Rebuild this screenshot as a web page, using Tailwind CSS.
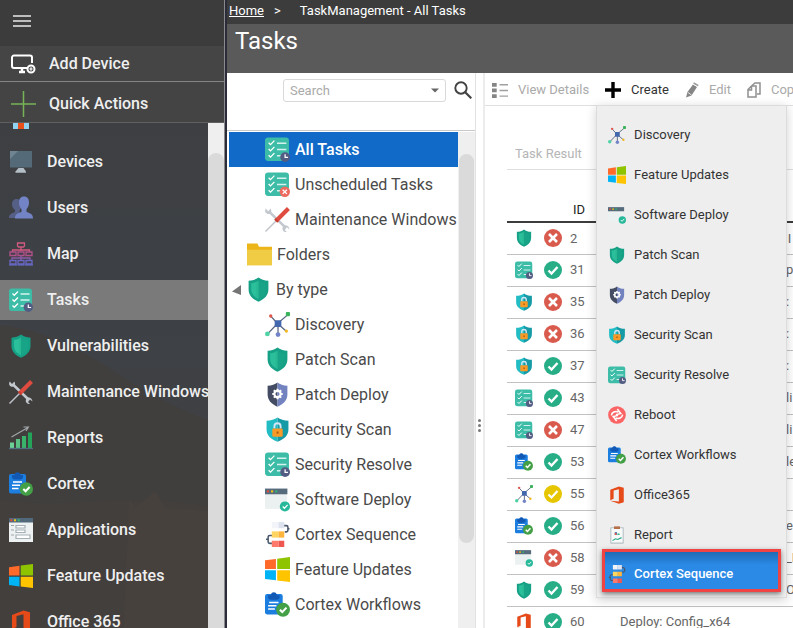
<!DOCTYPE html>
<html lang="en">
<head>
    <meta charset="UTF-8">
    <meta name="viewport" content="width=device-width, initial-scale=1.0">
    <title>Tasks - TaskManagement</title>
    <!-- Tailwind CSS CDN -->
    <script src="https://cdn.jsdelivr.net/npm/@tailwindcss/browser@4"></script>
</head>
<body class="flex h-screen overflow-hidden bg-[#2a2c38] font-['Roboto',sans-serif] text-[#4a4a4a]">

    <!-- Icon definitions -->
    <svg class="hidden" aria-hidden="true">
        <symbol id="i-checklist" viewBox="0 0 24 24">
            <rect x="0" y="0.500" width="23" height="22.500" rx="3" fill="#3dbda7"/>
            <path d="M3.500 5.500l1.800 1.800L9 3.500M3.500 11.500l1.800 1.800L9 9.500M3.500 17.500l1.800 1.800L9 15.500" fill="none" stroke="#fff" stroke-width="1.300"/>
            <path d="M11.500 6h9M11.500 12h9M11.500 18h5" stroke="#d5f3ee" stroke-width="1.300"/>
        </symbol>
        <symbol id="i-tasks" viewBox="0 0 24 24">
            <use href="#i-checklist"/>
            <circle cx="19.300" cy="19.300" r="4.700" fill="#535d83"/>
            <path d="M19.300 16.500v3h2.800" fill="none" stroke="#fff" stroke-width="1.200"/>
        </symbol>
        <symbol id="i-unscheduled" viewBox="0 0 24 24">
            <use href="#i-checklist"/>
            <circle cx="19" cy="19" r="5" fill="#ed6a5e"/>
            <path d="M17 17l4 4M21 17l-4 4" stroke="#fff" stroke-width="1.300"/>
        </symbol>
        <symbol id="i-shield" viewBox="0 0 24 24">
            <path d="M12 0.500c2.500 1.800 5.500 3 9.500 3.200V12c0 5.500-4 9.500-9.500 11.700C6.500 21.500 2.500 17.500 2.500 12V3.700C6.500 3.500 9.500 2.300 12 .500z" fill="#16a085"/>
            <path d="M12 3.500c-2 1.500-4.500 2.300-7 2.600V12c0 4.200 3 7.200 7 9z" fill="#2bc09b"/>
            <path d="M12 3.500c2 1.500 4.500 2.300 7 2.600V12c0 4.200-3 7.200-7 9z" fill="#17a487"/>
            <path d="M12 3.500c-.7.500-1.400.9-2 1.200V20c.6.400 1.300.7 2 1z" fill="#28b893"/>
        </symbol>
        <symbol id="i-shield-gear" viewBox="0 0 24 24">
            <path d="M12 .500C9.500 2.300 6.500 3.500 2.500 3.700V12c0 5.500 4 9.500 9.500 11.700z" fill="#434c63"/>
            <path d="M12 .500c2.500 1.800 5.500 3 9.500 3.200V12c0 5.500-4 9.500-9.500 11.700z" fill="#7383bf"/>
            <circle cx="12" cy="11.500" r="3" fill="none" stroke="#fff" stroke-width="2"/>
            <path d="M12 6.500v2M12 14.500v2M7 11.500h2M15 11.500h2M8.500 8l1.400 1.400M14.100 13.600l1.400 1.400M15.500 8l-1.400 1.400M9.900 13.600L8.500 15" stroke="#fff" stroke-width="2"/>
        </symbol>
        <symbol id="i-shield-lock" viewBox="0 0 24 24">
            <path d="M12 .500C9.500 2.300 5.500 3.500 1.500 3.700V12c0 5.500 4 9.500 10.500 11.700z" fill="#22bcc4"/>
            <path d="M12 .500c2.500 1.800 6.500 3 10.500 3.200V12c0 5.500-4 9.500-10.500 11.700z" fill="#169aa6"/>
            <path d="M9 11V9a3 3 0 0 1 6 0v2" fill="none" stroke="#d5e4f5" stroke-width="1.800"/>
            <rect x="7" y="11" width="10" height="8" rx="1" fill="#f79a28"/>
            <rect x="11.200" y="14" width="1.800" height="2" fill="#a85b10"/>
        </symbol>
        <symbol id="i-discovery" viewBox="0 0 24 24">
            <path d="M12 11L22 2.500M12 11L2.500 21M12 11L5.500 4M12.500 11v11M12 11l8.500 7.500" stroke="#566380" stroke-width="1.200"/>
            <rect x="9.300" y="8" width="6.400" height="6.400" rx="1.200" fill="#4468ad"/>
            <rect x="20" y="0" width="4" height="4" rx="1" fill="#3db35e"/>
            <circle cx="5.500" cy="3.800" r="1.600" fill="#e0554b"/>
            <circle cx="2.300" cy="21" r="2.300" fill="#4fd3a5"/>
            <circle cx="12.500" cy="21.700" r="2.300" fill="#7484c9"/>
            <circle cx="20.500" cy="18.300" r="1.600" fill="#f2b822"/>
        </symbol>
        <symbol id="i-windows" viewBox="0 0 24 24">
            <path d="M0 3.200L10.500 1.800V11.500H0z" fill="#ff6a2b"/>
            <path d="M11.700 1.600L24 0v11.500H11.700z" fill="#8fc400"/>
            <path d="M0 12.700h10.500v9.700L0 21z" fill="#00b3f4"/>
            <path d="M11.700 12.700H24V24l-12.300-1.500z" fill="#ffc400"/>
        </symbol>
        <symbol id="i-tools" viewBox="0 0 24 24">
            <path d="M4 4.500l15.500 15" stroke="#c3c8ce" stroke-width="2.500"/>
            <path d="M5.500 1.500L3 4 .800 1.500C-.5 3.500 0 6 2.500 6.700 5 7.200 7 5 5.500 1.500z" fill="#c3c8ce"/>
            <path d="M23.500 21.500L21 19.500l-2 2.500 2 2c-2.500.500-5-1.500-4-4.500s6-2.500 6.500 2z" fill="#c3c8ce"/>
            <path d="M.500 23.500L11 13" stroke="#bfc4ca" stroke-width="1.400"/>
            <path d="M11 13L22.500 1.500" stroke="#e04b3f" stroke-width="4"/>
            <path d="M9.500 11.500l3 3" stroke="#c93c31" stroke-width="2"/>
        </symbol>
        <symbol id="i-folder" viewBox="0 0 24 24">
            <path d="M0 1.500h10l1.500 3H24V10H0z" fill="#ecb61a"/>
            <path d="M0 7.500h24V22.500H0z" fill="#f0cc45"/>
        </symbol>
        <symbol id="i-deploy" viewBox="0 0 24 24">
            <path d="M0 7h21v14H0z" fill="#ebf0f0"/>
            <path d="M0 1.500h21.500V7H0z" fill="#566b7c"/>
            <rect x="1.800" y="3.200" width="2" height="2" fill="#e24d3f"/>
            <rect x="5.800" y="3.200" width="2" height="2" fill="#f1c40f"/>
            <rect x="9.800" y="3.200" width="2" height="2" fill="#2eb872"/>
            <circle cx="19.100" cy="18.700" r="4.900" fill="#28b99b"/>
            <path d="M17 18.700l1.700 1.700 3-3.200" fill="none" stroke="#fff" stroke-width="1.200"/>
        </symbol>
        <symbol id="i-sequence" viewBox="0 0 24 24">
            <path d="M18 3.500h2.500a1.500 1.500 0 0 1 1.500 1.500v3a1.500 1.500 0 0 1-1.500 1.500H19M22 6.500h1.500M7 13H4.500A1.500 1.500 0 0 0 3 14.500V19a1.500 1.500 0 0 0 1.500 1.500H7M1 16.500h2" fill="none" stroke="#4b586b" stroke-width="1.500"/>
            <path d="M6.500 0H13v6H6.500z" fill="#f2f4fa"/><path d="M13 0h5.500v6H13z" fill="#dce2ee"/>
            <path d="M6.500 9H13v6H6.500z" fill="#ffd562"/><path d="M13 9h5.500v6H13z" fill="#ffb43b"/>
            <path d="M6.500 18H13v6H6.500z" fill="#ff7a6b"/><path d="M13 18h5.500v6H13z" fill="#ef5850"/>
        </symbol>
        <symbol id="i-cortex" viewBox="0 0 24 24">
            <rect x="0" y="2" width="17" height="19.500" rx="2" fill="#1c7fe0"/>
            <path d="M3 6V3h2.500C6 1 7.200.300 8.500.300S11 1 11.500 3H14v3L12 7.500H5z" fill="#1259b5"/>
            <path d="M4 10h9M3 13.200h8M3 16.400h6.500" stroke="#fff" stroke-width="1.500"/>
            <circle cx="17.300" cy="17" r="6.700" fill="#43a047"/>
            <path d="M14.300 17l2.300 2.300 4-4.300" fill="none" stroke="#fff" stroke-width="2"/>
        </symbol>
        <symbol id="i-office" viewBox="0 0 24 24">
            <path d="M3 5L14.500.500 21 2.300v19.400L14.500 23.500 3 19.500l11.500 1.300V4.300L7.500 6v11L3 19z" fill="#e64a19"/>
        </symbol>
        <symbol id="i-report" viewBox="0 0 24 24">
            <rect x="3" y="1.500" width="18" height="22" rx="1" fill="#b8c1c6"/>
            <rect x="4.500" y="3" width="15" height="19" fill="#f8fafa"/>
            <path d="M8 .500h8V4H8z" fill="#b66f49"/>
            <path d="M6 12h3V8h3v4z" fill="#3a8ee0"/><path d="M9 12V9h2.500v3z" fill="#e05a47"/><path d="M12.500 12h3v-2h-3z" fill="#2fb793"/>
            <path d="M6 19.500l4-2.500 3 1 5-2.500" fill="none" stroke="#27a98a" stroke-width="1.500"/>
        </symbol>
        <symbol id="i-reboot" viewBox="0 0 24 24">
            <circle cx="12" cy="12" r="11.800" fill="#fb6464"/>
            <path d="M4.500 12.500C5 8.500 9.500 6 14 8M19.500 11.500c-.5 4-5 6.500-9.500 4.500" fill="none" stroke="#fff" stroke-width="2"/>
            <path d="M12.500 4l4.500 6-6.500 1.500M11.500 20L7 14l6.500-1.500" fill="none" stroke="#fff" stroke-width="2"/>
        </symbol>
        <symbol id="i-devices" viewBox="0 0 24 24">
            <path d="M1 1h22v16.500H1z" fill="#546a79"/>
            <path d="M1 1h8L1 9z" fill="#6f8594"/>
            <path d="M9.500 18h5l2.500 3.500v1.200H6.500v-1.200z" fill="#b4bec6"/>
        </symbol>
        <symbol id="i-users" viewBox="0 0 24 24">
            <path d="M7.500 3c3.500 0 5 2.500 5 5.500s-1 5-2 6v7.500H0c0-3 1-4 6-6v-2c-2-1.500-3-3.500-3-6S4.500 3 7.500 3z" fill="#566086"/>
            <path d="M15 .500c3.500 0 5 2.500 5 6 0 3-1 5-2.500 6.500V16c5 1.500 6.500 3 6.500 6.500H6C6 19 7.500 17.500 12.500 16v-3C11 11.500 10 9.500 10 6.500c0-3.500 1.500-6 5-6z" fill="#7384c6"/>
        </symbol>
        <symbol id="i-map" viewBox="0 0 24 24">
            <g fill="none" stroke-width="1.300">
                <path d="M8.500 1h7v3l-1 1h-5l-1-1zM12 5v4M3.500 10V8h17v2" stroke="#d25a80"/>
                <path d="M1 10h6v3.500H1zM9 10h6v3.500H9zM17 10h6v3.500h-6z" stroke="#b3508c"/>
                <path d="M12 13.500V18M3 18v-2h18v2" stroke="#8e5ba8"/>
                <path d="M1 18.500h6V22H1zM9 18.500h6V22H9zM17 18.500h6V22h-6z" stroke="#6b66c5"/>
            </g>
            <path d="M0 23h8M8.500 23h7M16 23h8" stroke="#6b70d8"/>
        </symbol>
        <symbol id="i-chart" viewBox="0 0 24 24">
            <path d="M1 16.500h4V22H1z" fill="#6ccf94"/><path d="M7 13h4v9H7z" fill="#5ac083"/>
            <path d="M13 10h4v12h-4z" fill="#3ab36b"/><path d="M19 6.500h4V22h-4z" fill="#22a558"/>
            <path d="M0 22.500h24" stroke="#526d80" stroke-width="1.300"/>
            <path d="M2.500 11L19 1.500M14.500 1h5l-2.500 4" fill="none" stroke="#a2a7aa" stroke-width="1.100"/>
        </symbol>
        <symbol id="i-apps" viewBox="0 0 24 24">
            <path d="M0 0h24v24H0z" fill="#eef1f2"/><path d="M0 0h24v4.500H0z" fill="#50687a"/>
            <rect x="1.300" y="1.300" width="2" height="2" fill="#e24d3f"/><rect x="5" y="1.300" width="2" height="2" fill="#f1c40f"/><rect x="8.700" y="1.300" width="2" height="2" fill="#2eb872"/>
            <path d="M2 7.500h3M2 12h3M2 17h3" stroke="#9ba6ab"/>
            <path d="M7 7.500h9v2.500H7zM7 12h9v2.500H7zM7 17h14v3.500H7z" fill="#fff" stroke="#a5b1b6" stroke-width="1.200"/>
        </symbol>
        <symbol id="i-ok" viewBox="0 0 18 18">
            <circle cx="9" cy="9" r="9" fill="#27ae87"/>
            <path d="M4.500 9.500l3 3 6-6.500" fill="none" stroke="#fff" stroke-width="2.400"/>
        </symbol>
        <symbol id="i-warn" viewBox="0 0 18 18">
            <circle cx="9" cy="9" r="9" fill="#e6c600"/>
            <path d="M4.500 9.500l3 3 6-6.500" fill="none" stroke="#fff" stroke-width="2.200"/>
        </symbol>
        <symbol id="i-fail" viewBox="0 0 18 18">
            <circle cx="9" cy="9" r="9" fill="#d95b4d"/>
            <path d="M5 5l8 8M13 5l-8 8" stroke="#fff" stroke-width="2.600"/>
        </symbol>
    </svg>

    <!-- Sidebar -->
    <nav class="relative flex w-[225px] shrink-0 flex-col overflow-hidden border-r border-[#8a8a8e] bg-linear-to-b from-[#3e3e3f] via-[#3d4146] via-50% to-[#433f3d] text-base font-medium text-[#efefef]">
        <svg class="absolute inset-0 h-full w-full" viewBox="0 0 225 628" preserveAspectRatio="none" aria-hidden="true">
            <path d="M0 325c50 5 90 30 120 50s70 40 105 50v203H0z" fill="#403f3e"/>
            <path d="M0 500c60 10 150-10 225 10v118H0z" fill="#433f3d"/>
            <path d="M124 628l6-130 6 10 20-17 10 17 59 4v116z" fill="#46413d"/>
        </svg>
        <div class="relative flex h-[46px] shrink-0 items-center bg-[#3c3c3c] px-[13px] pb-1">
            <button type="button" aria-label="Menu">
                <svg class="h-[14px] w-[18px]" viewBox="0 0 18 14"><path d="M0 2h18M0 7h18M0 12h18" stroke="#e8e8e8" stroke-width="1.300"/></svg>
            </button>
        </div>
        <a href="#" class="relative flex h-9 shrink-0 items-center gap-[13px] border-b border-[#858585] bg-[#454545] pl-[11px]">
            <svg class="h-5 w-[25px]" viewBox="0 0 25 20">
                <path d="M16 14H3a2 2 0 0 1-2-2V3.500A2 2 0 0 1 3 1.500h16a2 2 0 0 1 2 2V9" fill="none" stroke="#fff" stroke-width="2"/>
                <path d="M8 18h6M11 14v4" stroke="#fff" stroke-width="2.500"/>
                <circle cx="20" cy="15" r="3.500" fill="#454545" stroke="#fff" stroke-width="2"/>
                <path d="M20 13.300v3.400M18.300 15h3.400" stroke="#fff" stroke-width="1.200"/>
            </svg>
            Add Device
        </a>
        <a href="#" class="relative flex h-[41px] shrink-0 items-center gap-[13px] border-b border-[#606060] bg-[#444444] pt-1 pl-[11px]">
            <svg class="h-[26px] w-[25px]" viewBox="0 0 25 26"><path d="M12.500 0v26M0 13h25" stroke="#77b255" stroke-width="1.500"/></svg>
            Quick Actions
        </a>
        <div class="relative flex min-h-0 grow">
            <div class="flex min-w-0 grow flex-col overflow-hidden whitespace-nowrap">
                <svg class="mb-[13px] ml-[13px] h-[6px] w-4 shrink-0" viewBox="0 0 16 6"><path d="M0 0h16v6H0z" fill="#8fd3f0"/><path d="M5 0h6v6H5z" fill="#e8501c"/></svg>
                <ul class="flex flex-col gap-[6px]">
                    <li><a href="#" class="flex h-10 items-center gap-[14px] pl-[9px]"><svg class="size-6 shrink-0"><use href="#i-devices"/></svg>Devices</a></li>
                    <li><a href="#" class="flex h-10 items-center gap-[14px] pl-[9px]"><svg class="size-6 shrink-0"><use href="#i-users"/></svg>Users</a></li>
                    <li><a href="#" class="flex h-10 items-center gap-[14px] pl-[9px]"><svg class="size-6 shrink-0"><use href="#i-map"/></svg>Map</a></li>
                    <li><a href="#" class="flex h-10 items-center gap-[14px] bg-[#7a7a7a] pl-[9px]"><svg class="size-6 shrink-0"><use href="#i-tasks"/></svg>Tasks</a></li>
                    <li><a href="#" class="flex h-10 items-center gap-[14px] pl-[9px]"><svg class="size-6 shrink-0"><use href="#i-shield"/></svg>Vulnerabilities</a></li>
                    <li><a href="#" class="flex h-10 items-center gap-[14px] pl-[9px]"><svg class="size-6 shrink-0"><use href="#i-tools"/></svg>Maintenance Windows</a></li>
                    <li><a href="#" class="flex h-10 items-center gap-[14px] pl-[9px]"><svg class="size-6 shrink-0"><use href="#i-chart"/></svg>Reports</a></li>
                    <li><a href="#" class="flex h-10 items-center gap-[14px] pl-[9px]"><svg class="size-6 shrink-0"><use href="#i-cortex"/></svg>Cortex</a></li>
                    <li><a href="#" class="flex h-10 items-center gap-[14px] pl-[9px]"><svg class="size-6 shrink-0"><use href="#i-apps"/></svg>Applications</a></li>
                    <li><a href="#" class="flex h-10 items-center gap-[14px] pl-[9px]"><svg class="size-6 shrink-0"><use href="#i-windows"/></svg>Feature Updates</a></li>
                    <li><a href="#" class="flex h-10 items-center gap-[14px] pl-[9px]"><svg class="size-6 shrink-0"><use href="#i-office"/></svg>Office 365</a></li>
                </ul>
            </div>
            <div class="w-4 shrink-0 bg-[#efefef] pt-[30px]"><div class="h-full rounded-t-full bg-[#dadada]"></div></div>
        </div>
    </nav>

    <main class="ml-[2px] flex min-w-0 grow flex-col">
        <!-- Breadcrumb and title -->
        <div class="flex h-6 shrink-0 items-center gap-[10px] bg-[#3c3c3c] pb-[2px] pl-[2px] text-[13px] text-white">
            <a href="#" class="underline">Home</a>
            <span>&gt;</span>
            <span class="ml-[9px]">TaskManagement - All Tasks</span>
        </div>
        <div class="h-[49px] shrink-0 bg-[#5a5a5a] pl-2"><h1 class="text-2xl leading-[34px] text-white">Tasks</h1></div>

        <div class="flex min-h-0 grow bg-white">
            <!-- Task tree -->
            <section class="flex w-[249px] shrink-0 flex-col border-r border-[#e2e2e2]">
                <div class="flex h-[58px] shrink-0 items-start justify-end gap-2 border-b border-[#c9c9c9] pt-[6px] pr-[3px]">
                    <div class="flex h-[23px] w-[163px] items-center rounded-[3px] border border-[#d9d9d9] px-[6px]">
                        <input type="text" aria-label="Search" placeholder="Search" class="min-w-0 grow text-[13px] outline-none placeholder:text-[#aaaaaa]">
                        <button type="button" aria-label="Show options"><svg class="h-[5px] w-2" viewBox="0 0 8 5"><path d="M0 .500h8L4 4.500z" fill="#666"/></svg></button>
                    </div>
                    <button type="button" aria-label="Find"><svg class="mt-[2px] size-[18px]" viewBox="0 0 18 18"><circle cx="7" cy="7" r="5.700" fill="none" stroke="#424242" stroke-width="1.900"/><path d="M11 11l6.300 6.300" stroke="#424242" stroke-width="2.200"/></svg></button>
                </div>
                <div class="flex min-h-0 grow pt-[1px] pl-[2px]">
                    <ul class="min-w-0 grow overflow-hidden text-base whitespace-nowrap">
                        <li><a href="#" class="flex h-[35px] items-center gap-[5px] bg-[#116ac8] pl-9 font-medium text-white"><svg class="size-[25px] shrink-0"><use href="#i-tasks"/></svg>All Tasks</a></li>
                        <li><a href="#" class="flex h-[35px] items-center gap-[5px] pl-9"><svg class="size-[25px] shrink-0"><use href="#i-unscheduled"/></svg>Unscheduled Tasks</a></li>
                        <li><a href="#" class="flex h-[35px] items-center gap-[5px] pl-9"><svg class="size-[25px] shrink-0"><use href="#i-tools"/></svg>Maintenance Windows</a></li>
                        <li><a href="#" class="flex h-[35px] items-center gap-[5px] pl-[18px]"><svg class="size-[25px] shrink-0"><use href="#i-folder"/></svg>Folders</a></li>
                        <li><a href="#" class="flex h-[35px] items-center gap-[5px] pl-[3px]"><svg class="h-[10px] w-[9px] shrink-0" viewBox="0 0 9 10"><path d="M9 0v10L0 6.500z" fill="#757575"/></svg><svg class="size-[25px] shrink-0"><use href="#i-shield"/></svg>By type</a></li>
                        <li><a href="#" class="flex h-[35px] items-center gap-[5px] pl-9"><svg class="size-[25px] shrink-0"><use href="#i-discovery"/></svg>Discovery</a></li>
                        <li><a href="#" class="flex h-[35px] items-center gap-[5px] pl-9"><svg class="size-[25px] shrink-0"><use href="#i-shield"/></svg>Patch Scan</a></li>
                        <li><a href="#" class="flex h-[35px] items-center gap-[5px] pl-9"><svg class="size-[25px] shrink-0"><use href="#i-shield-gear"/></svg>Patch Deploy</a></li>
                        <li><a href="#" class="flex h-[35px] items-center gap-[5px] pl-9"><svg class="size-[25px] shrink-0"><use href="#i-shield-lock"/></svg>Security Scan</a></li>
                        <li><a href="#" class="flex h-[35px] items-center gap-[5px] pl-9"><svg class="size-[25px] shrink-0"><use href="#i-tasks"/></svg>Security Resolve</a></li>
                        <li><a href="#" class="flex h-[35px] items-center gap-[5px] pl-9"><svg class="size-[25px] shrink-0"><use href="#i-deploy"/></svg>Software Deploy</a></li>
                        <li><a href="#" class="flex h-[35px] items-center gap-[5px] pl-9"><svg class="size-[25px] shrink-0"><use href="#i-sequence"/></svg>Cortex Sequence</a></li>
                        <li><a href="#" class="flex h-[35px] items-center gap-[5px] pl-9"><svg class="size-[25px] shrink-0"><use href="#i-windows"/></svg>Feature Updates</a></li>
                        <li><a href="#" class="flex h-[35px] items-center gap-[5px] pl-9"><svg class="size-[25px] shrink-0"><use href="#i-cortex"/></svg>Cortex Workflows</a></li>
                    </ul>
                    <div class="w-[17px] shrink-0 bg-[#efefef] px-[1px] pt-[22px]"><div class="h-[82%] rounded-full bg-[#dadada]"></div></div>
                </div>
            </section>

            <!-- Splitter -->
            <div class="flex w-[7px] shrink-0 flex-col items-center justify-center gap-[2px] pt-[150px] *:size-[3px] *:rounded-full *:bg-[#777777]">
                <i></i><i></i><i></i>
            </div>

            <!-- Task list -->
            <section class="flex min-w-0 grow flex-col border-l-2 border-[#ececec]">
                <div class="flex h-[33px] shrink-0 border-b border-[#e0e0e0] pt-[2px] text-[13px] whitespace-nowrap text-[#aaaaaa]">
                    <button type="button" class="flex items-center gap-[10px] pr-2 pl-[7px]">
                        <svg class="size-4" viewBox="0 0 17 17"><path d="M0 1h5v4H0zM0 7h5v4H0zM0 13h5v4H0z" fill="#858585"/><path d="M8 3h9M8 9h9M8 15h9" stroke="#a0a0a0" stroke-width="1.500"/></svg>
                        View Details
                    </button>
                    <div class="relative flex">
                        <button type="button" class="flex items-center gap-[10px] px-2 text-[#333333]">
                            <svg class="size-4" viewBox="0 0 16 16"><path d="M8 0v16M0 8h16" stroke="#000" stroke-width="3.400"/></svg>
                            Create
                        </button>
                        <!-- Create menu -->
                        <div class="absolute top-[30px] -left-[1px] z-10 flex w-[191px] flex-col border border-[#dcdcdc] bg-[#eeeeee] pt-[9px] pb-[3px] text-[13px] text-[#333333] shadow-[0_2px_10px_rgba(0,0,0,0.18)]">
                            <button type="button" class="flex h-10 items-center gap-2 pl-[11px]"><svg class="size-[18px]"><use href="#i-discovery"/></svg>Discovery</button>
                            <button type="button" class="flex h-10 items-center gap-2 pl-[11px]"><svg class="size-[18px]"><use href="#i-windows"/></svg>Feature Updates</button>
                            <button type="button" class="flex h-10 items-center gap-2 pl-[11px]"><svg class="size-[18px]"><use href="#i-deploy"/></svg>Software Deploy</button>
                            <button type="button" class="flex h-10 items-center gap-2 pl-[11px]"><svg class="size-[18px]"><use href="#i-shield"/></svg>Patch Scan</button>
                            <button type="button" class="flex h-10 items-center gap-2 pl-[11px]"><svg class="size-[18px]"><use href="#i-shield-gear"/></svg>Patch Deploy</button>
                            <button type="button" class="flex h-10 items-center gap-2 pl-[11px]"><svg class="size-[18px]"><use href="#i-shield-lock"/></svg>Security Scan</button>
                            <button type="button" class="flex h-10 items-center gap-2 pl-[11px]"><svg class="size-[18px]"><use href="#i-tasks"/></svg>Security Resolve</button>
                            <button type="button" class="flex h-10 items-center gap-2 pl-[11px]"><svg class="size-[18px]"><use href="#i-reboot"/></svg>Reboot</button>
                            <button type="button" class="flex h-10 items-center gap-2 pl-[11px]"><svg class="size-[18px]"><use href="#i-cortex"/></svg>Cortex Workflows</button>
                            <button type="button" class="flex h-10 items-center gap-2 pl-[11px]"><svg class="size-[18px]"><use href="#i-office"/></svg>Office365</button>
                            <button type="button" class="flex h-10 items-center gap-2 pl-[11px]"><svg class="size-[18px]"><use href="#i-report"/></svg>Report</button>
                            <button type="button" class="mx-[5px] -mt-[6px] mb-[2px] flex h-[43px] items-center gap-2 border-3 border-[#f04444] bg-linear-to-b from-[#1f6bb4] to-[#2a8ae6] to-35% pt-[6px] pl-[3px] font-medium text-white shadow-[0_2px_5px_rgba(0,0,0,0.5)]"><svg class="size-[18px]"><use href="#i-sequence"/></svg>Cortex Sequence</button>
                        </div>
                    </div>
                    <button type="button" class="flex items-center gap-[10px] px-2">
                        <svg class="h-4 w-[14px]" viewBox="0 0 14 16"><path d="M8 2.500l4 2.500L6.500 13.500 1 15.500 2.500 10z" fill="#858585"/><path d="M9 .300l4.700 2.700-1 1.500L8 1.800z" fill="#9c9c9c"/><path d="M8 2l4.500 2.700M3 10.500l3.500 2.500" stroke="#fff" stroke-width=".8"/></svg>
                        Edit
                    </button>
                    <button type="button" class="flex items-center gap-[10px] px-2">
                        <svg class="h-4 w-[14px]" viewBox="0 0 14 16"><path d="M5 3.500L8 1h5v11h-3M1 7.500L4.500 4H9v11H1zM4.500 4v4H1" fill="none" stroke="#909090" stroke-width="1.500"/></svg>
                        Copy
                    </button>
                </div>
                <div class="mt-[31px] ml-[22px] flex h-[33px] shrink-0 border-b border-[#dedede] pt-[2px]">
                    <input type="text" aria-label="Task Result" placeholder="Task Result" class="grow pl-2 text-[13px] outline-none placeholder:text-[#b5b5b5]">
                </div>
                <div class="ml-[22px] overflow-hidden pt-7">
                    <table class="w-full table-fixed text-[13px] whitespace-nowrap text-[#666666]">
                        <thead>
                            <tr class="h-6 border-b-2 border-[#3c3c3c] text-[#222222]">
                                <th class="w-[37px]"></th><th class="w-[26px]"></th><th class="w-[50px] pl-[3px] text-left font-normal">ID</th><th class="w-[166px]"></th><th></th>
                            </tr>
                        </thead>
                        <tbody class="[&_td]:p-0 [&_tr]:h-8 [&_tr]:border-b [&_tr]:border-[#c2c2c2]">
                            <tr><td><svg class="ml-2 size-[18px]"><use href="#i-shield"/></svg></td><td><svg class="size-[18px]"><use href="#i-fail"/></svg></td><td>2</td><td></td><td class="text-center">I</td></tr>
                            <tr><td><svg class="ml-2 size-[18px]"><use href="#i-tasks"/></svg></td><td><svg class="size-[18px]"><use href="#i-ok"/></svg></td><td>31</td><td></td><td>p</td></tr>
                            <tr><td><svg class="ml-2 size-[18px]"><use href="#i-shield-lock"/></svg></td><td><svg class="size-[18px]"><use href="#i-fail"/></svg></td><td>35</td><td></td><td>:</td></tr>
                            <tr><td><svg class="ml-2 size-[18px]"><use href="#i-shield-lock"/></svg></td><td><svg class="size-[18px]"><use href="#i-fail"/></svg></td><td>36</td><td></td><td>:</td></tr>
                            <tr><td><svg class="ml-2 size-[18px]"><use href="#i-shield-lock"/></svg></td><td><svg class="size-[18px]"><use href="#i-ok"/></svg></td><td>37</td><td></td><td>:</td></tr>
                            <tr><td><svg class="ml-2 size-[18px]"><use href="#i-tasks"/></svg></td><td><svg class="size-[18px]"><use href="#i-ok"/></svg></td><td>43</td><td></td><td>li</td></tr>
                            <tr><td><svg class="ml-2 size-[18px]"><use href="#i-tasks"/></svg></td><td><svg class="size-[18px]"><use href="#i-fail"/></svg></td><td>47</td><td></td><td>li</td></tr>
                            <tr><td><svg class="ml-2 size-[18px]"><use href="#i-cortex"/></svg></td><td><svg class="size-[18px]"><use href="#i-ok"/></svg></td><td>53</td><td></td><td>le</td></tr>
                            <tr><td><svg class="ml-2 size-[18px]"><use href="#i-discovery"/></svg></td><td><svg class="size-[18px]"><use href="#i-warn"/></svg></td><td>55</td><td></td><td></td></tr>
                            <tr><td><svg class="ml-2 size-[18px]"><use href="#i-cortex"/></svg></td><td><svg class="size-[18px]"><use href="#i-ok"/></svg></td><td>56</td><td></td><td>ea</td></tr>
                            <tr><td><svg class="ml-2 size-[18px]"><use href="#i-deploy"/></svg></td><td><svg class="size-[18px]"><use href="#i-fail"/></svg></td><td>58</td><td></td><td>_D</td></tr>
                            <tr><td><svg class="ml-2 size-[18px]"><use href="#i-shield"/></svg></td><td><svg class="size-[18px]"><use href="#i-ok"/></svg></td><td>59</td><td></td><td>On</td></tr>
                            <tr><td><svg class="ml-2 size-[18px]"><use href="#i-office"/></svg></td><td><svg class="size-[18px]"><use href="#i-ok"/></svg></td><td>60</td><td>Deploy: Config_x64</td><td></td></tr>
                        </tbody>
                    </table>
                </div>
            </section>
        </div>
    </main>
</body>
</html>
